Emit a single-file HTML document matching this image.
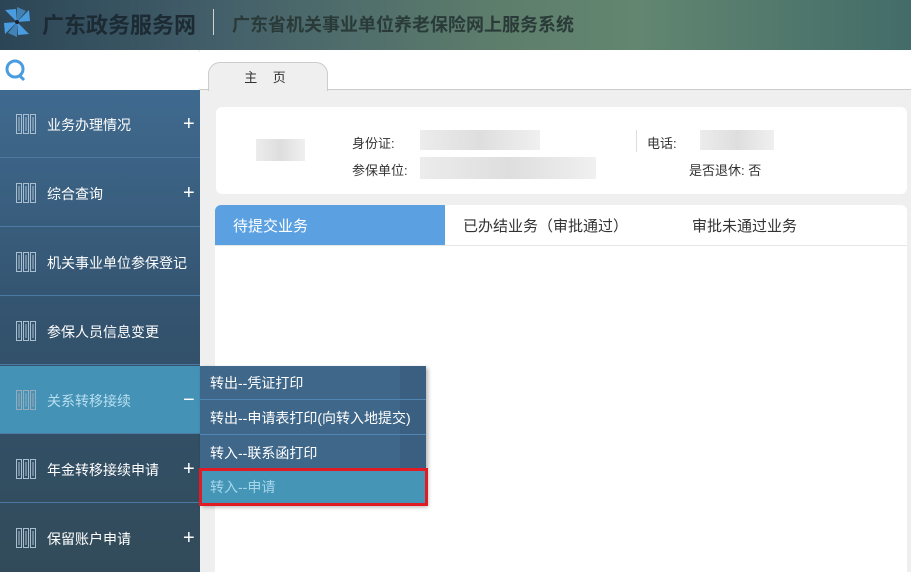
<!DOCTYPE html>
<html><head><meta charset="utf-8"><style>
*{margin:0;padding:0;box-sizing:border-box}
body{width:911px;height:572px;overflow:hidden;background:#efefef;font-family:"Liberation Sans","Noto Sans CJK SC",sans-serif;position:relative}
.hdr{position:absolute;left:0;top:0;width:911px;height:50px;background:linear-gradient(90deg,#2b4556 0%,#44606a 25%,#5e7e6c 55%,#628670 70%,#436c69 100%)}
.hdr .t1{position:absolute;left:42px;top:8px;font-size:22px;font-weight:bold;color:#1c2a33}
.hdr .sep{position:absolute;left:213px;top:9px;width:1px;height:26px;background:#c8d4cc}
.hdr .t2{position:absolute;left:232px;top:11px;font-size:18px;font-weight:bold;color:#2a3a38}
.search{position:absolute;left:0;top:50px;width:200px;height:40px;background:#fff;border-radius:0 4px 4px 0}
.side{position:absolute;left:0;top:90px;width:200px;height:482px;background:linear-gradient(180deg,#3f6a8f 0%,#33526d 50%,#324b5a 100%)}
.item{position:absolute;left:0;width:200px;height:68px;color:#fff;font-size:14px;border-bottom:1px solid #4d7aa3}
.item span{position:absolute;left:47px;top:25px}
.item .pl{position:absolute;left:183px;top:24px;font-size:20px;font-weight:300;line-height:20px}
.item svg{position:absolute;left:16px;top:24px}
.act{background:#4492b6;color:#b8dff0}
.topbar{position:absolute;left:200px;top:50px;width:711px;height:40px;background:#fff;border-bottom:1px solid #ccc}
.tab{position:absolute;left:208px;top:62px;width:120px;height:29px;background:#efefef;border:1px solid #ccc;border-bottom:none;border-radius:12px 12px 0 0;font-size:13px;color:#333;text-align:center;line-height:30px;letter-spacing:6px}
.card{position:absolute;left:216px;top:107px;width:691px;height:87px;background:#fff;border-radius:6px;font-size:13px;color:#333}
.blur{position:absolute;background:linear-gradient(90deg,#ececec,#dedede,#f0f0f0)}
.card2{position:absolute;left:215px;top:205px;width:692px;height:367px;background:#fff;border-radius:6px 6px 0 0;overflow:hidden}
.tabs{height:41px;border-bottom:1px solid #e6e6e6;font-size:15px;color:#333;position:relative}
.tabs div{position:absolute;top:0;height:40px;line-height:44px}
.sub{position:absolute;left:200px;top:366px;width:226px;height:139px;background:#3f6789;box-shadow:2px 2px 4px rgba(0,0,0,.3)}
.sub .stripe{position:absolute;right:0;top:0;width:26px;height:104px;background:#3a5f80}
.sub div.s{position:absolute;left:0;width:226px;height:34px;border-bottom:1px solid #4f86b3;color:#fff;font-size:14px;padding-left:10px;line-height:34px}
.hl{position:absolute;left:199px;top:468px;width:229px;height:38px;border:3px solid #e21a23;background:#4595b7;color:#a6d6ea;font-size:14px;line-height:32px;padding-left:8px}
</style></head><body>
<div class="hdr">
<svg style="position:absolute;left:2px;top:6px" width="30" height="32" viewBox="0 0 30 32"><g fill="#4a9ce0"><path d="M15 16 L3 4 L14 3Z"/><path d="M15 16 L27 4 L28 15Z"/><path d="M15 16 L27 28 L16 29Z"/><path d="M15 16 L3 28 L2 17Z"/><path d="M15 16 L15 1 L24 5Z" opacity=".7"/><path d="M15 16 L15 31 L6 27Z" opacity=".7"/></g><circle cx="15" cy="16" r="2" fill="#223"/></svg>
<div class="t1">广东政务服务网</div><div class="sep"></div>
<div class="t2">广东省机关事业单位养老保险网上服务系统</div></div>
<div class="search"><svg style="position:absolute;left:4px;top:9px" width="24" height="24" viewBox="0 0 24 24"><circle cx="11" cy="10" r="8" fill="none" stroke="#4a9ce0" stroke-width="3"/><path d="M15 16 L20 21" stroke="#4a9ce0" stroke-width="3"/></svg></div>
<div class="side"></div>
<div class="topbar"></div>
<div class="tab">主 页</div>
<div class="card">
<div class="blur" style="left:40px;top:32px;width:49px;height:22px"></div>
<div style="position:absolute;left:136px;top:26px">身份证:</div>
<div class="blur" style="left:204px;top:23px;width:120px;height:20px"></div>
<div style="position:absolute;left:420px;top:23px;width:1px;height:22px;background:#ddd"></div>
<div style="position:absolute;left:431px;top:26px">电话:</div>
<div class="blur" style="left:484px;top:23px;width:74px;height:20px"></div>
<div style="position:absolute;left:136px;top:53px">参保单位:</div>
<div class="blur" style="left:204px;top:50px;width:176px;height:22px"></div>
<div style="position:absolute;left:473px;top:53px">是否退休: 否</div>
</div>
<div class="card2"><div class="tabs">
<div style="left:0;width:230px;background:#5ba1e2;color:#fff;padding-left:18px">待提交业务</div>
<div style="left:248px">已办结业务（审批通过）</div>
<div style="left:477px">审批未通过业务</div></div></div>
<div class="item" style="top:90px"><svg width="20" height="20"><g fill="none" stroke="#a9bfd0"><rect x=".5" y=".5" width="5" height="19"/><rect x="7.5" y=".5" width="5" height="19"/><rect x="14.5" y=".5" width="5" height="19"/></g><g stroke="#a9bfd0"><path d="M3 3v14M10 3v14M17 3v14"/></g></svg><span>业务办理情况</span><b class="pl">+</b></div>
<div class="item" style="top:159px"><svg width="20" height="20"><g fill="none" stroke="#a9bfd0"><rect x=".5" y=".5" width="5" height="19"/><rect x="7.5" y=".5" width="5" height="19"/><rect x="14.5" y=".5" width="5" height="19"/></g><g stroke="#a9bfd0"><path d="M3 3v14M10 3v14M17 3v14"/></g></svg><span>综合查询</span><b class="pl">+</b></div>
<div class="item" style="top:228px"><svg width="20" height="20"><g fill="none" stroke="#a9bfd0"><rect x=".5" y=".5" width="5" height="19"/><rect x="7.5" y=".5" width="5" height="19"/><rect x="14.5" y=".5" width="5" height="19"/></g><g stroke="#a9bfd0"><path d="M3 3v14M10 3v14M17 3v14"/></g></svg><span>机关事业单位参保登记</span></div>
<div class="item" style="top:297px"><svg width="20" height="20"><g fill="none" stroke="#a9bfd0"><rect x=".5" y=".5" width="5" height="19"/><rect x="7.5" y=".5" width="5" height="19"/><rect x="14.5" y=".5" width="5" height="19"/></g><g stroke="#a9bfd0"><path d="M3 3v14M10 3v14M17 3v14"/></g></svg><span>参保人员信息变更</span></div>
<div class="item act" style="top:366px"><svg width="20" height="20"><g fill="none" stroke="#9ab"><rect x=".5" y=".5" width="5" height="19"/><rect x="7.5" y=".5" width="5" height="19"/><rect x="14.5" y=".5" width="5" height="19"/></g><g stroke="#9ab"><path d="M3 3v14M10 3v14M17 3v14"/></g></svg><span>关系转移接续</span><b class="pl" style="color:#fff">−</b></div>
<div class="item" style="top:435px"><svg width="20" height="20"><g fill="none" stroke="#a9bfd0"><rect x=".5" y=".5" width="5" height="19"/><rect x="7.5" y=".5" width="5" height="19"/><rect x="14.5" y=".5" width="5" height="19"/></g><g stroke="#a9bfd0"><path d="M3 3v14M10 3v14M17 3v14"/></g></svg><span>年金转移接续申请</span><b class="pl">+</b></div>
<div class="item" style="top:504px;border:none"><svg width="20" height="20"><g fill="none" stroke="#a9bfd0"><rect x=".5" y=".5" width="5" height="19"/><rect x="7.5" y=".5" width="5" height="19"/><rect x="14.5" y=".5" width="5" height="19"/></g><g stroke="#a9bfd0"><path d="M3 3v14M10 3v14M17 3v14"/></g></svg><span>保留账户申请</span><b class="pl">+</b></div>
<div class="sub"><div class="stripe"></div>
<div class="s" style="top:0">转出--凭证打印</div>
<div class="s" style="top:35px">转出--申请表打印(向转入地提交)</div>
<div class="s" style="top:70px">转入--联系函打印</div></div>
<div class="hl">转入--申请</div>
</body></html>
